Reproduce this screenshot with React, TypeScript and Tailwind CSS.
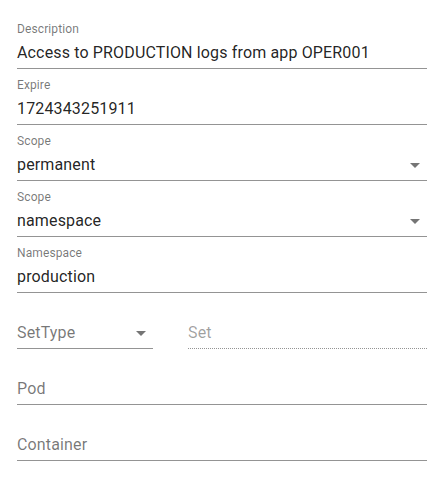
import React from 'react';

const ArrowDrop = () => (
  <svg
    viewBox="0 0 24 24"
    className="absolute right-0 top-[4px] w-[24px] h-[24px] fill-[rgba(0,0,0,0.54)]"
  >
    <path d="M7 10l5 5 5-5z" />
  </svg>
);

type FieldProps = {
  label: string;
  value?: string;
  select?: boolean;
  disabled?: boolean;
  className?: string;
};

const Field = ({ label, value, select, disabled, className = '' }: FieldProps) => {
  const filled = value !== undefined && value !== '';
  return (
    <div className={`relative h-[48px] ${className}`}>
      {filled ? (
        <label className="absolute left-0 top-[1.5px] text-[12px] leading-[12px] tracking-[0.11px] text-[rgba(0,0,0,0.54)]">
          {label}
        </label>
      ) : (
        <label
          className={`absolute left-0 top-[24px] text-[16px] leading-[16px] tracking-[0.15px] ${
            disabled ? 'text-[rgba(0,0,0,0.38)]' : 'text-[rgba(0,0,0,0.54)]'
          }`}
        >
          {label}
        </label>
      )}
      <div
        className={`relative mt-[16px] h-[32px] pt-[6px] border-b ${
          disabled
            ? 'border-dotted border-[rgba(0,0,0,0.42)]'
            : 'border-solid border-[rgba(0,0,0,0.42)]'
        }`}
      >
        <div className="text-[16px] leading-[19px] tracking-[0.15px] text-[rgba(0,0,0,0.87)] pr-[24px] whitespace-nowrap">
          {filled ? value : '\u00a0'}
        </div>
        {select && <ArrowDrop />}
      </div>
    </div>
  );
};

export default function App() {
  return (
    <div className="min-h-screen bg-white font-['Roboto',sans-serif]">
      <div className="flex flex-col gap-[8px] pt-[21px] px-[17px]">
        <Field label="Description" value="Access to PRODUCTION logs from app OPER001" />
        <Field label="Expire" value="1724343251911" />
        <Field label="Scope" value="permanent" select />
        <Field label="Scope" value="namespace" select />
        <Field label="Namespace" value="production" />
        <div className="flex">
          <Field label="SetType" select className="w-[136px]" />
          <Field label="Set" disabled className="flex-1 ml-[35px]" />
        </div>
        <Field label="Pod" />
        <Field label="Container" />
      </div>
    </div>
  );
}
